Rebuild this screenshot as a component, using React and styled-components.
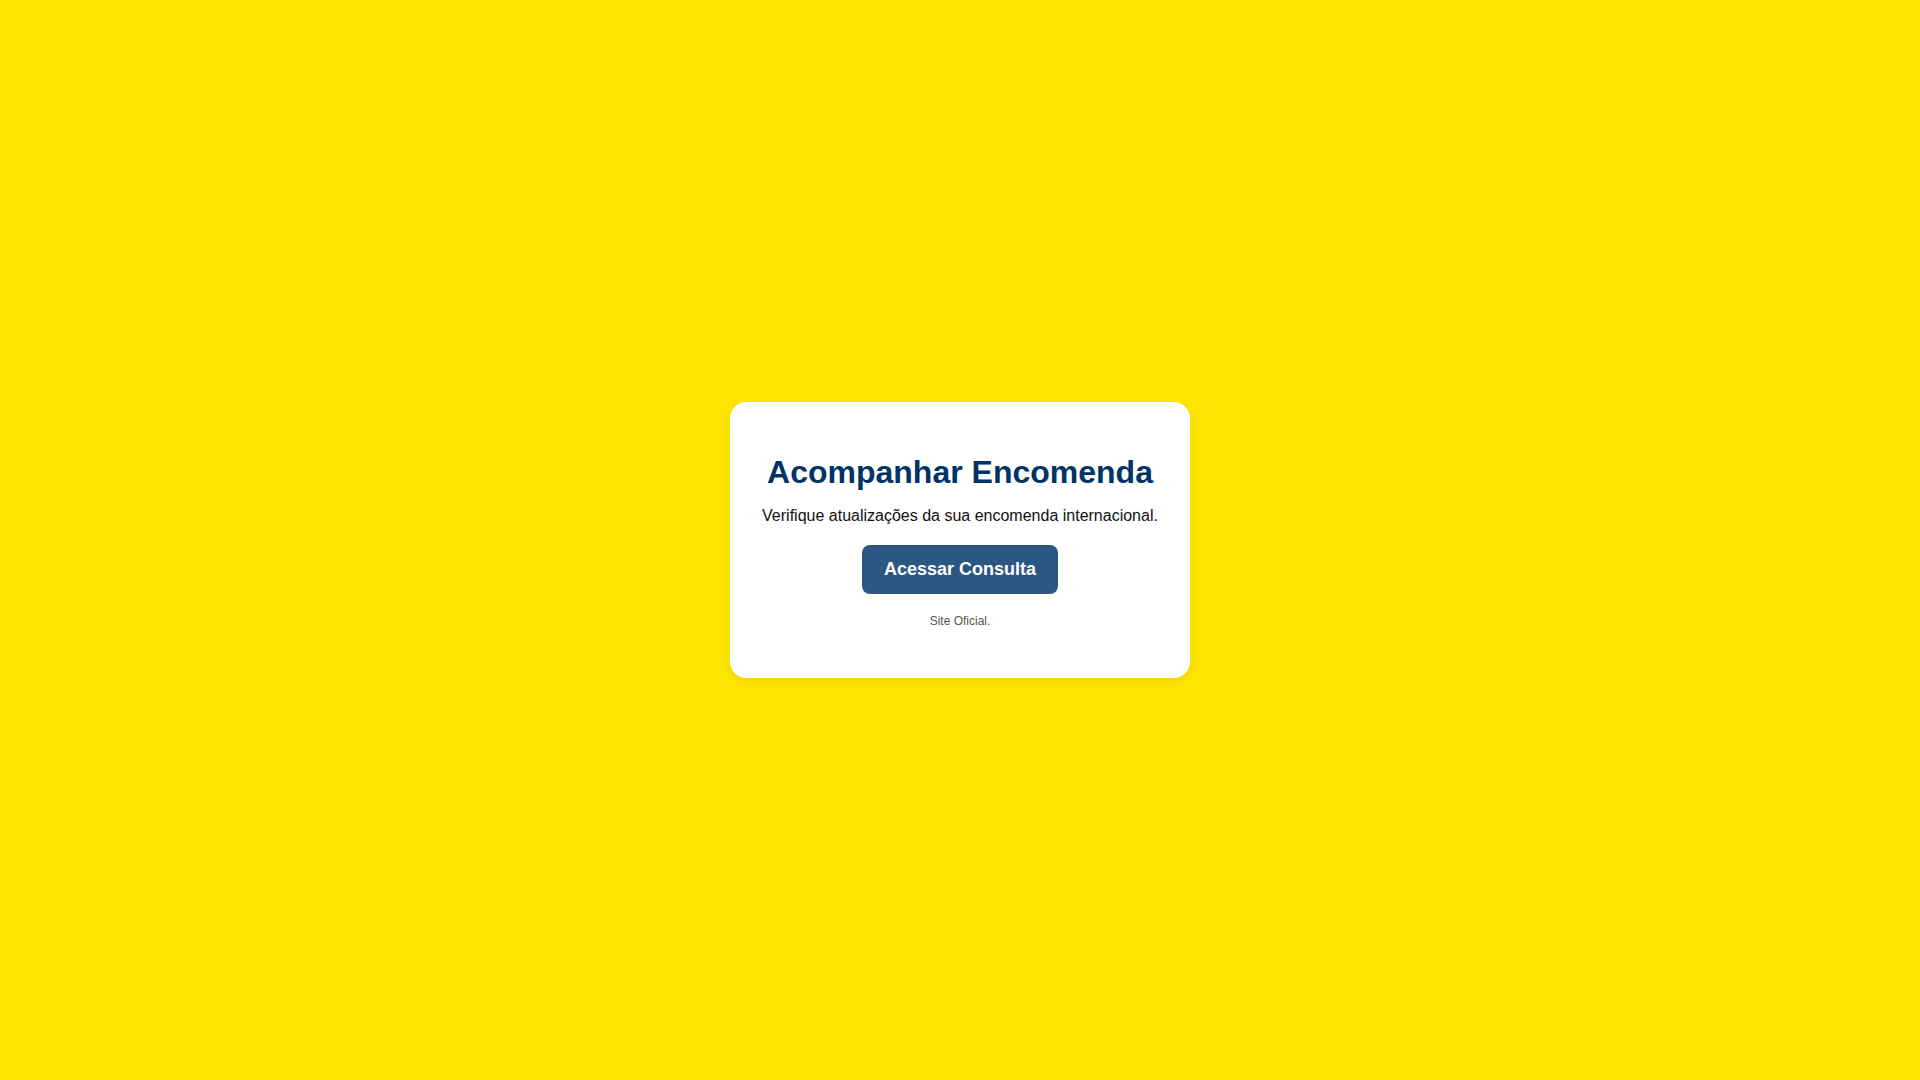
import React from "react";
import styled, { createGlobalStyle } from "styled-components";

const Global = createGlobalStyle`
  html, body { margin: 0; padding: 0; height: 100%; }
  body {
    background: #ffe600;
    font-family: "Liberation Sans", Arial, sans-serif;
  }
  #root { height: 100%; }
`;

const Page = styled.main`
  min-height: 100vh;
  display: flex;
  align-items: center;
  justify-content: center;
`;

const Card = styled.section`
  width: 400px;
  box-sizing: content-box;
  background: #ffffff;
  border-radius: 16px;
  padding: 52px 30px 50px;
  box-shadow: 0 4px 14px rgba(0, 0, 0, 0.08);
  display: flex;
  flex-direction: column;
  align-items: center;
  text-align: center;
`;

const Title = styled.h1`
  margin: 0;
  font-size: 32px;
  font-weight: 700;
  color: #003366;
  white-space: nowrap;
`;

const Subtitle = styled.p`
  margin: 16px 0 0;
  font-size: 16px;
  color: #111111;
  white-space: nowrap;
`;

const Button = styled.a`
  margin-top: 20px;
  display: inline-block;
  box-sizing: border-box;
  height: 49px;
  line-height: 49px;
  padding: 0 22px;
  min-width: 196px;
  background: #2c5782;
  color: #ffffff;
  font-size: 18px;
  font-weight: 700;
  border-radius: 8px;
  text-decoration: none;
  cursor: pointer;
`;

const Note = styled.p`
  margin: 20px 0 0;
  font-size: 12px;
  color: #555555;
`;

export default function App() {
  return (
    <>
      <Global />
      <Page>
        <Card>
          <Title>Acompanhar Encomenda</Title>
          <Subtitle>Verifique atualizações da sua encomenda internacional.</Subtitle>
          <Button href="#">Acessar Consulta</Button>
          <Note>Site Oficial.</Note>
        </Card>
      </Page>
    </>
  );
}
